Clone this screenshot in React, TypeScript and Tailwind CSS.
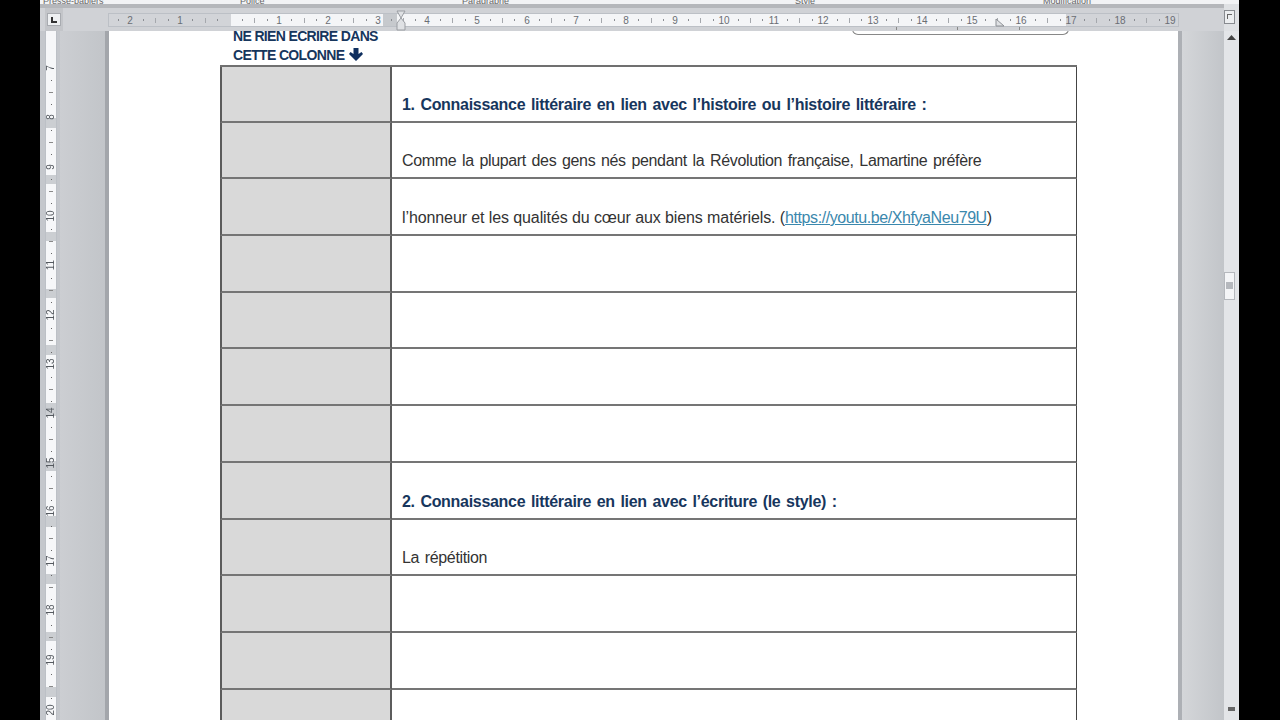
const sans = "font-['Liberation_Sans',Arial,sans-serif]";
const rowTexts: (null | { t: "h" | "p" | "l"; s: string })[] = [
  { t: "h", s: "1. Connaissance littéraire en lien avec l’histoire ou l’histoire littéraire :" },
  { t: "p", s: "Comme la plupart des gens nés pendant la Révolution française, Lamartine préfère" },
  { t: "l", s: "" },
  null,
  null,
  null,
  null,
  { t: "h", s: "2. Connaissance littéraire en lien avec l’écriture (le style) :" },
  { t: "p", s: "La répétition" },
  null,
  null,
  null,
];

const hNums: [number, string][] = [
  [130, "2"], [180, "1"], [279, "1"], [328, "2"], [378, "3"], [427, "4"], [477, "5"], [527, "6"], [576, "7"],
  [626, "8"], [675, "9"], [724, "10"], [774, "11"], [823, "12"], [873, "13"], [922, "14"], [972, "15"],
  [1021, "16"], [1071, "17"], [1120, "18"], [1170, "19"],
];
const hTicks = Array.from({ length: 22 }, (_, i) => 155 + i * 49.55);
const hDots = Array.from({ length: 44 }, (_, i) => 118 + i * 24.78);

const vNums: [number, string][] = [
  [68, "7"], [117, "8"], [167, "9"], [216, "10"], [265, "11"], [315, "12"], [364, "13"], [413, "14"],
  [463, "15"], [511, "16"], [561, "17"], [610, "18"], [660, "19"], [710, "20"],
];
const vBands: [number, number][] = [
  [118, 128], [175, 184], [232, 241], [289, 298], [345, 355], [403, 416], [461, 471], [516, 527], [574, 584], [632, 641], [687, 697],
];
const vTicks = Array.from({ length: 14 }, (_, i) => 92 + i * 49.5);
const vDots = vTicks.flatMap((y) => [y - 12, y + 12]);

function HRuler() {
  return (
    <div className="relative w-[1071px] h-[14px] bg-[#f4f5f7] border border-[#bcc0c6] overflow-hidden text-[10px] leading-[13px] text-[#6a6e74]">
      <div className="absolute left-0 top-0 h-full w-[122px] bg-[#d2d4d8]" />
      <div className="absolute left-[274px] top-0 h-full w-[14px] bg-[#c6c9cd]" />
      <div className="absolute left-[957px] top-0 h-full w-[114px] bg-[#d2d4d8]" />
      {hDots.map((x, i) => (
        <div key={i} className="absolute top-[5px] w-[1px] h-[2px] bg-[#8a8d92]" style={{ left: x - 109 }} />
      ))}
      {hTicks.map((x, i) => (
        <div key={i} className="absolute top-[4px] w-[1px] h-[5px] bg-[#a5a8ad]" style={{ left: x - 109 }} />
      ))}
      {hNums.map(([x, s]) => (
        <span key={x} className="absolute top-0 -translate-x-1/2" style={{ left: x - 109 }}>
          {s}
        </span>
      ))}
    </div>
  );
}

function VRuler() {
  return (
    <div className="relative w-[12px] h-full bg-[#f6f7f9] border-x border-[#bcc0c6] text-[10px] leading-[10px] text-[#555a60]">
      {vBands.map(([a, b]) => (
        <div key={a} className="absolute left-0 w-full bg-[#cbced2]" style={{ top: a - 31, height: b - a }} />
      ))}
      {vDots.map((y, i) => (
        <div key={i} className="absolute left-[5px] w-[1px] h-[1px] bg-[#666]" style={{ top: y - 31 }} />
      ))}
      {vTicks.map((y, i) => (
        <div key={i} className="absolute left-[3px] w-[4px] h-[1px] bg-[#888]" style={{ top: y - 31 }} />
      ))}
      {vNums.map(([y, s]) => (
        <span key={y} className="absolute left-[5px] -translate-x-1/2 -translate-y-1/2 -rotate-90 whitespace-nowrap" style={{ top: y - 31 }}>
          {s}
        </span>
      ))}
    </div>
  );
}

function Row({ r, last, first }: { r: (typeof rowTexts)[number]; last: boolean; first: boolean }) {
  const h = first ? "h-[55.7px]" : "h-[56.7px]";
  return (
    <>
      <div className={`bg-[#d9d9d9] border-l-2 border-r-2 border-l-[#5c5c5c] border-r-[#5c5c5c] ${h} ${last ? "" : "border-b-2 border-b-[#757575]"}`} />
      <div className={`${h} flex items-end pb-[6px] pl-[10px] border-r border-r-[#444] whitespace-nowrap ${last ? "" : "border-b-2 border-b-[#757575]"}`}>
        {r?.t === "h" && (
          <span className="text-[16px] leading-[20px] font-bold text-[#17365d] tracking-[-0.3px] [word-spacing:1.5px]">{r.s}</span>
        )}
        {r?.t === "p" && (
          <span className="text-[16px] leading-[20px] text-[#333] tracking-[-0.35px] [word-spacing:1.6px]">{r.s}</span>
        )}
        {r?.t === "l" && (
          <span className="text-[16px] leading-[20px] text-[#333] tracking-[-0.1px]">
            l’honneur et les qualités du cœur aux biens matériels. (
            <span className="text-[#3b88ad] underline tracking-[-0.42px]">https://youtu.be/XhfyaNeu79U</span>)
          </span>
        )}
      </div>
    </>
  );
}

export default function App() {
  return (
    <div className={`${sans} w-[1280px] h-[720px] overflow-hidden bg-black pl-[40px]`}>
      <div className="w-[1199px] h-[720px] flex flex-col bg-[#c4c7cc] blur-[0.35px]">
        <div className="h-[8px] bg-[#b5b7bb] shrink-0 overflow-hidden">
          <div className="h-[4px] bg-[#f2f3f5] flex text-[9px] leading-[2px] text-[#666] overflow-hidden">
            <span className="ml-[3px] w-[197px]">Presse-papiers</span>
            <span className="w-[222px]">Police</span>
            <span className="w-[333px]">Paragraphe</span>
            <span className="w-[248px]">Style</span>
            <span>Modification</span>
          </div>
        </div>
        <div className="h-[23px] shrink-0 bg-[#d0d2d6] flex items-start relative">
          <div className="w-[18px] h-[23px] ml-[5px] shrink-0 bg-[#c3c5c9] pt-[5px] px-[2px]">
            <div className="h-[13px] bg-[#eef0f2] border border-[#a8abb0] flex items-center justify-center">
              <div className="w-[6px] h-[6px] border-l-2 border-b-2 border-[#333]" />
            </div>
          </div>
          <div className="ml-[45px] mt-[5px]">
            <HRuler />
          </div>
          <svg className="absolute left-[356px] top-[1px] w-[10px] h-[22px]" viewBox="0 0 10 22">
            <path d="M1 2h8L5 9l4 5v7H1v-7l4-5z" fill="#dfe1e4" stroke="#9a9da2" />
          </svg>
          <svg className="absolute left-[955px] top-[10px] w-[10px] h-[9px]" viewBox="0 0 10 9">
            <path d="M1 1v7h8z" fill="#dfe1e4" stroke="#8d9095" />
          </svg>
          <div className="absolute left-[856px] top-[19px] w-[1px] h-[3px] bg-[#888]" />
          <div className="absolute left-[917px] top-[19px] w-[1px] h-[3px] bg-[#888]" />
          <div className="absolute left-[979px] top-[19px] w-[1px] h-[3px] bg-[#888]" />
          <div className="absolute right-0 -top-[4px] w-[15px] h-[27px] bg-[#dfe1e4] pt-[6px]">
            <div className="w-[11px] h-[14px] bg-[#eceef0] border border-[#888b90]">
              <div className="mt-[3px] mx-[2px] h-[5px] border-t border-l border-[#666]" />
            </div>
          </div>
        </div>
        <div className="flex-1 min-h-0 flex">
          <div className="w-[69px] shrink-0 pl-[5px] flex">
            <VRuler />
            <div className="flex-1 ml-[3px] bg-gradient-to-r from-[#ccced2] to-[#c2c5c9] border-r-4 border-r-[#a3a6ab]" />
          </div>
          <div className="w-[1069px] shrink-0 bg-white overflow-hidden relative pl-[111px]">
            <div className="absolute left-[743px] -top-[5px] w-[217px] h-[9px] border-x border-b border-[#888] rounded-b-md" />
            <div className="h-[34px] flex flex-col pl-[13px] text-[14px] leading-[19px] font-bold tracking-[-0.65px] text-[#17365d]">
              <div className="-mt-[4px]">NE RIEN ECRIRE DANS</div>
              <div className="flex items-center gap-[5px]">
                CETTE COLONNE
                <svg className="w-[14px] h-[13px] -mt-[3px]" viewBox="0 0 14 13">
                  <path d="M4.500 0h5v6l3-2 1.500 2L7 13 0 6l1.500-2 3 2z" fill="#0f2f5f" />
                </svg>
              </div>
            </div>
            <div className="grid grid-cols-[172px_685px] w-[857px] border-t-2 border-t-[#707070]">
              {rowTexts.map((r, i) => (
                <Row key={i} r={r} first={i === 0} last={i === rowTexts.length - 1} />
              ))}
            </div>
          </div>
          <div className="flex-1 flex min-w-0">
            <div className="flex-1 border-l-4 border-l-[#adb0b5] bg-gradient-to-r from-[#d4d6d9] to-[#c2c5c9]" />
            <div className="relative w-[15px] shrink-0 bg-[#e3e5e8]">
              <svg className="absolute left-[3px] top-[4px] w-[9px] h-[5px]" viewBox="0 0 9 5">
                <path d="M4.500 0L9 5H0z" fill="#444" />
              </svg>
              <div className="absolute left-0 top-[241px] w-[11px] h-[28px] bg-[#f4f5f7] border border-[#b5b8bd]">
                <div className="mt-[9px] mx-[1px] h-[7px] bg-[#b5b8bd]" />
              </div>
              <div className="absolute left-[4px] top-[676px] w-[7px] h-[4px] bg-[#666]" />
            </div>
          </div>
        </div>
      </div>
    </div>
  );
}
